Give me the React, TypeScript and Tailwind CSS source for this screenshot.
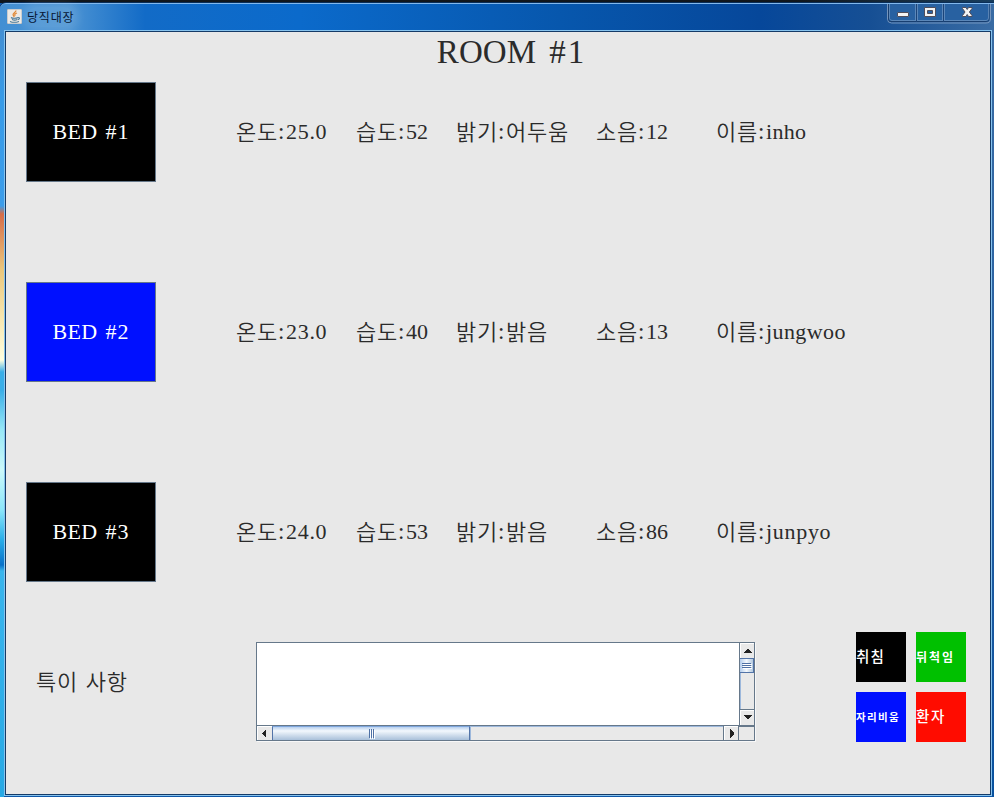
import type { ReactNode } from 'react';

const HANGUL = "font-['Noto_Sans_CJK_KR',sans-serif] font-[350]";
const LATIN = "font-['Liberation_Serif','Noto_Sans_CJK_KR',serif]";

function Hangul({ children }: { children: ReactNode }) {
  return <span className={`${HANGUL} text-[22px] leading-8 tracking-[0.8px]`}>{children}</span>;
}

function Field({ label, value, width, spacing }: { label: string; value: string; width: string; spacing: string }) {
  const korean = /[가-힣]/.test(value);
  return (
    <div className={`${width} flex shrink-0 items-center whitespace-pre leading-8 text-[#2b2b2b]`}>
      <span className="flex h-8 w-[42px] items-center pb-1"><Hangul>{label}</Hangul></span>
      <span className={`${LATIN} w-2 text-[23px]`}>:</span>
      {korean ? (
        <span className="flex h-8 items-center pb-1"><Hangul>{value}</Hangul></span>
      ) : (
        <span className={`${LATIN} text-[22px] ${spacing}`}>{value}</span>
      )}
    </div>
  );
}

const beds = [
  { id: 'BED #1', color: 'bg-black', temp: '25.0', hum: '52', light: '어두움', noise: '12', name: 'inho', ns: 'tracking-[0.3px]' },
  { id: 'BED #2', color: 'bg-[#0010ff]', temp: '23.0', hum: '40', light: '밝음', noise: '13', name: 'jungwoo', ns: 'tracking-[0.4px]' },
  { id: 'BED #3', color: 'bg-black', temp: '24.0', hum: '53', light: '밝음', noise: '86', name: 'junpyo', ns: 'tracking-[0.7px]' },
];

function BedRow({ bed }: { bed: (typeof beds)[number] }) {
  return (
    <div className="mb-[100px] flex h-[100px] items-center pl-5">
      <button className={`mr-20 h-[100px] w-[130px] shrink-0 border border-[#66788a] pb-px ${bed.color} ${LATIN} whitespace-pre text-[22px] text-white`}>
        <span className="tracking-[0.3px]">{bed.id.split(' ')[0]}</span><span className="pl-[8px] tracking-[1px]">{bed.id.split(' ')[1]}</span>
      </button>
      <Field label="온도" value={bed.temp} width="w-[120px]" spacing="tracking-[0.7px]" />
      <Field label="습도" value={bed.hum} width="w-[100px]" spacing="tracking-[0px]" />
      <Field label="밝기" value={bed.light} width="w-[140px]" spacing="" />
      <Field label="소음" value={bed.noise} width="w-[120px]" spacing="tracking-[0px]" />
      <Field label="이름" value={bed.name} width="w-[160px]" spacing={bed.ns} />
    </div>
  );
}

function Arrow({ points }: { points: string }) {
  return (
    <svg width="9" height="9" viewBox="0 0 9 9" shapeRendering="crispEdges">
      <polygon points={points} fill="#222" />
    </svg>
  );
}

function TextArea() {
  return (
    <div className="mt-[9px] flex h-[99px] w-[499px] flex-col border border-[#66788a] bg-[#e9e9e9] shadow-[1px_1px_0_#f8f8f8]">
      <div className="flex h-[82px]">
        <div className="w-[482px] bg-white" />
        <div className="flex w-[15px] flex-col border-l border-[#66788a]">
          <div className="flex h-[15px] items-center justify-center border-l border-t border-white"><Arrow points="0,6 4,2 5,2 9,6" /></div>
          <div className="flex h-[15px] flex-col items-center justify-center gap-px border border-l-0 border-[#5374a8] bg-gradient-to-r from-[#b4cdec] via-[#f3f8fd] to-[#b4c9df]">
            <i className="h-px w-[9px] bg-[#4f71a5] shadow-[1px_1px_0_#fff]" />
            <i className="h-px w-[9px] bg-[#4f71a5] shadow-[1px_1px_0_#fff]" />
            <i className="h-px w-[9px] bg-[#4f71a5] shadow-[1px_1px_0_#fff]" />
          </div>
          <div className="flex-1 border-l border-[#9db8dc]" />
          <div className="flex h-4 items-center justify-center border-t border-[#66788a] shadow-[inset_1px_1px_0_#fff]"><Arrow points="0,2 9,2 5,6 4,6" /></div>
        </div>
      </div>
      <div className="flex h-[15px] border-t border-[#66788a]">
        <div className="flex w-[15px] items-center justify-center border-l border-t border-white pr-0.5"><Arrow points="6,0 6,9 2,5 2,4" /></div>
        <div className="flex w-[198px] items-center justify-center gap-px border-x border-t border-[#5374a8] border-t-[#7ea6dd] bg-gradient-to-b from-[#b8d0ee] via-[#f3f8fd] via-30% to-[#a9c0da]">
          <i className="h-[9px] w-px bg-[#4f71a5] shadow-[1px_1px_0_#fff]" />
          <i className="h-[9px] w-px bg-[#4f71a5] shadow-[1px_1px_0_#fff]" />
          <i className="h-[9px] w-px bg-[#4f71a5] shadow-[1px_1px_0_#fff]" />
        </div>
        <div className="flex-1 border-l border-t border-[#9db8dc]" />
        <div className="flex w-4 items-center justify-center border-x border-[#66788a] shadow-[inset_1px_1px_0_#fff]"><Arrow points="3,0 7,4 7,5 3,9" /></div>
        <div className="w-[15px] border-t border-[#66788a]" />
      </div>
    </div>
  );
}

const legend = [
  { text: '취침', style: 'bg-black text-[14.5px] tracking-[1.2px] pb-0.5 font-medium' },
  { text: '뒤척임', style: 'bg-[#00c000] text-[12px] tracking-[2px] font-bold' },
  { text: '자리비움', style: 'bg-[#0010ff] text-[10.5px] tracking-[1.3px] font-bold' },
  { text: '환자', style: 'bg-[#ff0c00] text-[14.5px] tracking-[1.6px] pb-0.5 font-medium' },
];

function JavaIcon() {
  return (
    <svg className="mb-[2px] ml-[7px]" width="15" height="15" viewBox="0 0 15 15" fill="none">
      <rect width="15" height="15" rx="1" fill="#eeeae5" stroke="#8795a5" strokeWidth=".7" />
      <path d="M9 1.5C9 3.5 5 4.3 6.2 6.2L7.3 8M10 4C7.3 5 7.5 5.5 8.2 6.8" stroke="#e18a38" strokeWidth="1.3" />
      <path d="M4 8.5c1 1 5.5 1 7 0M5 10.5c1.5.7 4 .7 5.3 0M3 12.4c2 .9 6.5.9 9 0M11 8.7c2-.7 2 1.5-.2 2" stroke="#477797" strokeWidth="1.1" />
    </svg>
  );
}

function WindowButtons() {
  return (
    <svg className="mb-[3px] mr-[3px] self-start" width="104" height="20" viewBox="0 0 104 20" fill="none">
      <path d="M.5 0V15Q.5 19 4.5 19H99Q103.5 19 103.5 15V0" stroke="#7595bd" />
      <path d="M1.5 0V15Q1.5 17.5 4 17.5H99Q102 17.5 102 15V0" fill="#2861a1" stroke="#173e70" />
      <path d="M2.5 0V14.5Q3 16.5 5 16.5H99Q101.5 16.5 101.5 14V0M28.5 0V16.5M30.5 0V16.5M55.5 0V16.5M57.5 0V16.5" stroke="#6891bf" strokeWidth=".8" />
      <path d="M29.5 0V18M56.5 0V18" stroke="#1b4479" />
      <rect x="10.5" y="8.5" width="11" height="4" rx=".5" fill="#f4f4f4" stroke="#514e5b" />
      <path fillRule="evenodd" d="M37.5 3.5H48.5V12.5H37.5ZM40.5 6.5V9.5H45.5V6.5Z" fill="#f4f4f4" stroke="#514e5b" />
      <path d="M75.5 3.5H79L80.2 5.5L81.5 3.5H85V4.5L82.4 8L85 11.5V12.5H81.5L80.2 10.5L79 12.5H75.5V11.5L78 8L75.5 4.5Z" fill="#f4f4f4" stroke="#514e5b" />
    </svg>
  );
}

export default function App() {
  return (
    <div className="flex h-[797px] w-[994px] flex-col overflow-hidden bg-[#0f58a9]">
      <div className="h-[3px] bg-gradient-to-r from-[#10161c] from-80% to-[#173d5e]" />
      <header className="flex h-[27px] items-center justify-between rounded-tl-md border-t border-[#82b8ec] bg-[linear-gradient(90deg,#438fd3_0px,#4b93d3_70px,#126bc7_145px,#0b6acb_300px,#0757ad_560px,#06479a_760px,#164f94_870px,#3a6ca4_994px)] shadow-[0_-1px_0_#092e59]">
        <div className="flex items-center">
          <JavaIcon />
          <span className="ml-[5px] rounded-full bg-white/10 font-['Noto_Sans_CJK_KR',sans-serif] text-[12px] leading-5 tracking-[0.8px] text-[#071735] shadow-[0_0_8px_5px_#ffffff1a]">당직대장</span>
        </div>
        <WindowButtons />
      </header>
      <div className="flex h-[767px]">
        <div className="w-1 bg-[linear-gradient(180deg,#438fd3_0px,#379be8_70px,#3c9dea_176px,#d56c48_184px,#dc8758_200px,#eac77c_240px,#f8e8b1_290px,#ffffe0_330px,#39aee8_342px,#39aee8_360px,#97e8f7_400px,#ccf9fa_440px,#8be6fa_480px,#28ade9_510px,#0871c9_535px,#39b5ed_541px,#28a9e5_767px)]" />
        <div className="h-[766px] w-[988px] border border-[#87c3ee]">
          <main className="h-[764px] w-[986px] border border-[#153b67] bg-[#e8e8e8]">
            <h1 className={`${LATIN} flex h-[50px] items-center justify-center whitespace-pre pb-[9px] pl-[27px] text-[33px] font-normal text-[#2b2b2b]`}>
              <span className="tracking-[0.1px]">ROOM</span><span className="pl-[13px] tracking-[2px]">#1</span>
            </h1>
            {beds.map((bed) => <BedRow key={bed.id} bed={bed} />)}
            <footer className="-mt-[50px] flex h-[110px] items-center">
              <div className="w-[250px] pb-[14px] pl-[30px] text-[#2b2b2b]"><span className="[word-spacing:2px]"><Hangul>특이 사항</Hangul></span></div>
              <TextArea />
              <div className="ml-[101px] grid grid-cols-2 gap-2.5">
                {legend.map((item) => (
                  <div key={item.text} className={`flex size-[50px] items-center whitespace-nowrap font-['Noto_Sans_CJK_KR',sans-serif] text-white ${item.style}`}>{item.text}</div>
                ))}
              </div>
            </footer>
          </main>
        </div>
        <div className="w-0.5 bg-gradient-to-b from-[#3a6ca4] to-[#07509e]" />
      </div>
    </div>
  );
}
